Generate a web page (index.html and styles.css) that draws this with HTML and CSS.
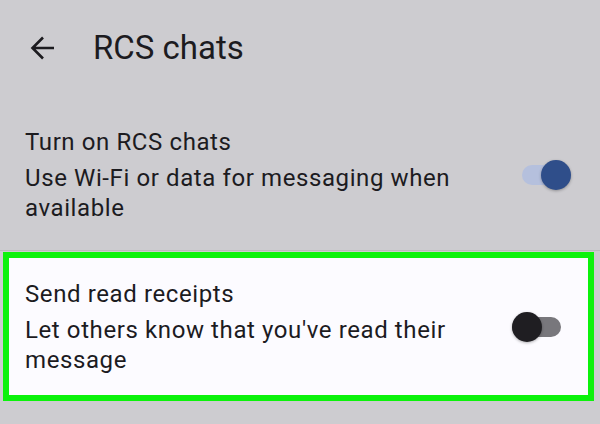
FILE: index.html
```html
<!DOCTYPE html>
<html lang="en">
<head>
    <meta charset="UTF-8">
    <meta name="viewport" content="width=device-width, initial-scale=1.0">
    <title>RCS chats</title>
    <link rel="stylesheet" href="styles.css">
</head>
<body>
    <header class="top-bar">
        <button class="back" aria-label="Back">
            <svg width="26" height="26" viewBox="0 0 26 26">
                <path d="M24 13H3M13 2.5L2.5 13L13 23.5" fill="none" stroke="#1c1b1f" stroke-width="2.6"/>
            </svg>
        </button>
        <h1>RCS chats</h1>
    </header>

    <!-- 设置项 -->
    <div class="setting">
        <div class="text">
            <div class="title">Turn on RCS chats</div>
            <div class="summary">Use Wi-Fi or data for messaging when available</div>
        </div>
        <div class="switch on"><span class="knob"></span></div>
    </div>

    <div class="setting highlight">
        <div class="text">
            <div class="title">Send read receipts</div>
            <div class="summary">Let others know that you've read their message</div>
        </div>
        <div class="switch"><span class="knob"></span></div>
    </div>
</body>
</html>
```

FILE: styles.css
```css
body {
    margin: 0;
    background-color: #cdccd0;
    font-family: Roboto, "Noto Sans", sans-serif;
    color: #1c1b1f;
    overflow: hidden;
}
.top-bar {
    display: flex;
    align-items: center;
    height: 96px;
    padding-left: 30px;
}
.back {
    background: none;
    border: none;
    padding: 0;
    width: 26px;
    height: 26px;
    margin-right: 37px;
}
.top-bar h1 {
    font-size: 33px;
    font-weight: 400;
    margin: 0;
    padding-bottom: 2px;
}
.setting {
    display: flex;
    align-items: center;
    padding: 31px 29px 27px 25px;
    border-bottom: 1px solid #bab9bd;
}
.text {
    flex: 1;
    padding-right: 40px;
}
.title,
.summary {
    font-size: 24px;
    letter-spacing: 0.6px;
}
.title {
    line-height: 30px;
    margin-bottom: 6px;
}
.summary {
    line-height: 30px;
}
.highlight {
    background-color: #fcfbff;
    border: 6px solid #0cf20c;
    margin: 1px 6px 0 3px;
    padding: 21px 27px 20px 16px;
}
.switch {
    position: relative;
    width: 49px;
    height: 20px;
    border-radius: 10px;
    background-color: #b5c0dd;
}
.knob {
    position: absolute;
    top: -5px;
    right: 0;
    width: 30px;
    height: 30px;
    border-radius: 50%;
    background-color: #2f4e8a;
    box-shadow: 0 1px 3px rgba(0, 0, 0, 0.3);
}
.highlight .switch {
    background-color: #78777c;
}
.highlight .knob {
    left: 0;
    right: auto;
    background-color: #1f1e22;
}
```
